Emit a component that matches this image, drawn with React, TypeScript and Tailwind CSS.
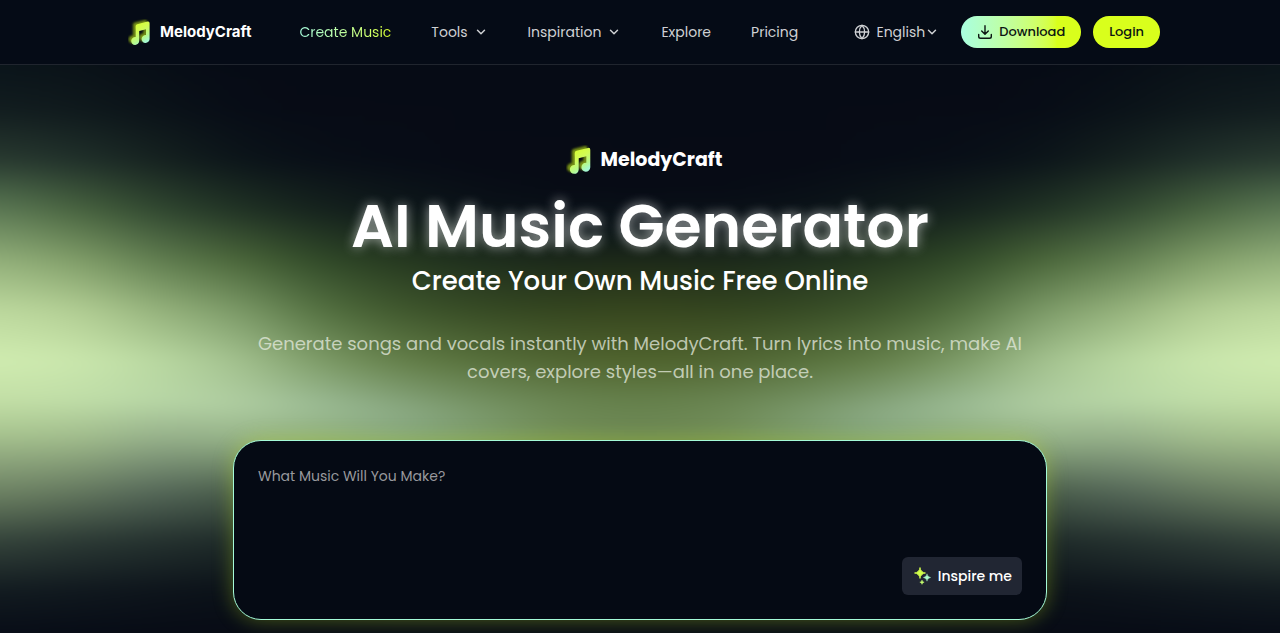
import React from "react";
import { ChevronDown, Globe } from "lucide-react";

type Column = { x: number; stops: [number, string][] };

const glow: Column[] = [
  { x: 0, stops: [[65, "#0a141a"], [110, "#121d1f"], [160, "#293a30"], [192, "#4a6548"], [228, "#708d62"], [264, "#96b37d"], [310, "#bcd89d"], [360, "#d0ecb0"], [400, "#c3dfa6"], [430, "#abc892"], [463, "#8aa27a"], [500, "#65795d"], [540, "#35443b"], [590, "#121b20"], [633, "#080d17"]] },
  { x: 80, stops: [[65, "#0a1218"], [110, "#0f191c"], [160, "#20302a"], [210, "#48643f"], [260, "#809d68"], [310, "#b2ce94"], [360, "#cae7ad"], [400, "#c0dea8"], [440, "#9fba8a"], [490, "#667a60"], [540, "#2c3a35"], [590, "#10181e"], [633, "#070c16"]] },
  { x: 160, stops: [[65, "#070d16"], [110, "#0a1218"], [160, "#15211f"], [210, "#304730"], [260, "#5f7c4f"], [310, "#94b17b"], [360, "#b9d8a1"], [400, "#b8d7a6"], [440, "#92ac88"], [490, "#56695a"], [540, "#25322f"], [590, "#0d141b"], [633, "#070b15"]] },
  { x: 240, stops: [[65, "#060b15"], [110, "#070c16"], [160, "#0b1419"], [210, "#203224"], [260, "#4a6639"], [310, "#7b9967"], [360, "#a2c08e"], [405, "#b0cea2"], [440, "#94b186"], [490, "#4c604c"], [540, "#1e2a29"], [590, "#0b1118"], [633, "#070b15"]] },
  { x: 320, stops: [[65, "#060b15"], [110, "#070b15"], [160, "#080e17"], [210, "#15221d"], [260, "#304928"], [310, "#537040"], [360, "#7c9a66"], [405, "#9bbb95"], [440, "#91b07c"], [490, "#485a43"], [540, "#19241f"], [633, "#070b15"]] },
  { x: 400, stops: [[65, "#060b15"], [160, "#070c16"], [210, "#0e181a"], [260, "#25381f"], [310, "#3f572d"], [360, "#637e48"], [410, "#8baa84"], [440, "#86a780"], [490, "#455740"], [633, "#070b15"]] },
  { x: 480, stops: [[65, "#060b15"], [170, "#070b15"], [210, "#0a1218"], [260, "#1e2e1d"], [310, "#364a24"], [360, "#566f3a"], [410, "#799769"], [440, "#7d9d6e"], [490, "#40513a"], [633, "#070b15"]] },
  { x: 560, stops: [[65, "#060b15"], [190, "#070b15"], [230, "#0d161a"], [270, "#202e1a"], [310, "#34451f"], [360, "#506431"], [400, "#688350"], [440, "#74905a"], [490, "#3a492d"], [633, "#070b15"]] },
  { x: 640, stops: [[65, "#060b15"], [190, "#070b15"], [230, "#0c1619"], [270, "#222f19"], [310, "#37461e"], [360, "#4f632c"], [400, "#647f4a"], [440, "#6f8a58"], [490, "#38462b"], [633, "#070b15"]] },
];

function GlowBackdrop() {
  return (
    <svg className="absolute inset-0 h-full w-full" viewBox="0 65 1280 568" preserveAspectRatio="none" aria-hidden="true">
      <defs>
        <filter id="soften" filterUnits="userSpaceOnUse" x="-160" y="0" width="1600" height="700" colorInterpolationFilters="sRGB">
          <feGaussianBlur stdDeviation="36 8" />
        </filter>
        {glow.map((c) => (
          <linearGradient key={c.x} id={`glow-${c.x}`} gradientUnits="userSpaceOnUse" x1="0" x2="0" y1="65" y2="633">
            {c.stops.map(([y, color]) => (
              <stop key={y} offset={(y - 65) / 568} stopColor={color} />
            ))}
          </linearGradient>
        ))}
      </defs>
      <g filter="url(#soften)">
        {glow.map((c) => {
          const edge = c.x === 0;
          return (
            <g key={c.x} fill={`url(#glow-${c.x})`}>
              <rect x={edge ? -160 : c.x - 40} y="0" width={edge ? 200 : 81} height="700" />
              <rect x={1240 - c.x} y="0" width={edge ? 200 : 81} height="700" />
            </g>
          );
        })}
      </g>
    </svg>
  );
}

function NoteMark({ id, className }: { id: string; className: string }) {
  const shape = "M9 6.2 Q9 4.6 10.6 4.2 L21 1.6 Q23 1.2 23 3.2 V19 A4 4 0 1 1 19.4 15 V9.2 L12.600 10.900 V21 A4 4 0 1 1 9 17 Z";
  return (
    <svg className={className} viewBox="3 0 22 27" aria-hidden="true">
      <defs>
        <linearGradient id={id} x1="0" y1="0" x2="0.5" y2="1">
          <stop offset="0" stopColor="#d9ff20" />
          <stop offset="0.5" stopColor="#d2fb55" />
          <stop offset="0.8" stopColor="#b6f98c" />
          <stop offset="1" stopColor="#a5f8d2" />
        </linearGradient>
        <filter id={`${id}-soft`} x="-30%" y="-30%" width="160%" height="160%">
          <feGaussianBlur stdDeviation="0.8" />
        </filter>
      </defs>
      <path d={shape} transform="translate(-1 -0.6)" fill="#9dbd14" opacity="0.75" filter={`url(#${id}-soft)`} />
      <path d={shape} transform="translate(1.6 1)" fill={`url(#${id})`} />
    </svg>
  );
}

function DownloadIcon() {
  return (
    <svg className="size-4" viewBox="0 0 16 16" fill="none" stroke="currentColor" strokeWidth="1.4" strokeLinecap="round" strokeLinejoin="round" aria-hidden="true">
      <path d="M8 1.800 V10 M4.700 6.900 L8 10.200 L11.300 6.900 M1.700 10.500 V12.500 Q1.700 14.300 3.500 14.300 H12.500 Q14.300 14.300 14.300 12.500 V10.500" />
    </svg>
  );
}

function Sparkles() {
  return (
    <svg className="size-5" viewBox="0 0 20 20" aria-hidden="true">
      <path d="M8 1.500 Q8.700 6.300 13.500 7 Q8.700 7.700 8 12.500 Q7.300 7.700 2.500 7 Q7.300 6.300 8 1.500Z" fill="#d2ff4a" stroke="#d2ff4a" strokeWidth="0.8" strokeLinejoin="round" />
      <path d="M15 7.800 Q15.500 11 18.700 11.500 Q15.500 12 15 15.200 Q14.500 12 11.300 11.500 Q14.500 11 15 7.800Z" fill="#a9fbc8" stroke="#a9fbc8" strokeWidth="0.4" />
      <path d="M10 14 Q10.300 15.900 12.200 16.200 Q10.300 16.500 10 18.400 Q9.700 16.500 7.800 16.200 Q9.700 15.900 10 14Z" fill="#c6ff70" stroke="#c6ff70" strokeWidth="0.4" />
    </svg>
  );
}

export default function App() {
  return (
    <div className="flex min-h-screen flex-col bg-[#060b15] font-['Poppins','Inter',sans-serif] text-white">
      <header className="border-b border-[#20252e] bg-[#050b16]">
        <div className="flex h-16 items-center justify-between pr-[120px] pl-32">
          <div className="flex items-center">
            <a href="#" className="flex items-center gap-2.5 font-['Inter',sans-serif] text-[15px] font-bold">
              <NoteMark id="mark-nav" className="h-[27px] w-[22px]" />
              MelodyCraft
            </a>
            <nav className="ml-12 flex items-center gap-10 text-sm text-[#cfd1d4]">
              <a href="#" className="bg-linear-to-r from-[#a5fbdc] to-[#d9ff20] bg-clip-text text-transparent">Create Music</a>
              <button className="flex items-center gap-1.5">Tools <ChevronDown className="size-3.5" strokeWidth={2.5} /></button>
              <button className="flex items-center gap-1.5">Inspiration <ChevronDown className="size-3.5" strokeWidth={2.5} /></button>
              <a href="#">Explore</a>
              <a href="#">Pricing</a>
            </nav>
          </div>
          <div className="flex items-center gap-3 text-sm">
            <button className="mr-2.5 flex items-center text-[#cfd1d4]">
              <Globe className="mr-1.5 size-4" strokeWidth={2} />
              English
              <ChevronDown className="size-3.5" strokeWidth={2.5} />
            </button>
            <button className="flex h-8 items-center gap-1.5 rounded-full bg-linear-to-r from-[#a9ffe0] to-[#d9ff1c] to-80% px-4 text-[13px] font-medium text-[#0b1512]">
              <DownloadIcon /> Download
            </button>
            <button className="h-8 rounded-full bg-[#d9ff1c] px-4 text-[13px] font-medium text-[#0b1512]">Login</button>
          </div>
        </div>
      </header>

      <main className="relative flex flex-1 flex-col items-center overflow-hidden px-6 pt-20 pb-3">
        <GlowBackdrop />
        <div className="relative flex items-center gap-2.5 pl-2 text-[19px] leading-[30px] font-bold">
          <NoteMark id="mark-hero" className="h-[30px] w-[25px]" />
          MelodyCraft
        </div>
        <h1 className="relative mt-[15px] text-center text-[60px] leading-[72px] font-semibold [text-shadow:0_0_12px_rgba(255,255,255,0.6)]">
          AI Music Generator
        </h1>
        <h2 className="relative text-center text-[26px] leading-[38px] font-medium">Create Your Own Music Free Online</h2>
        <p className="relative mt-[30px] max-w-[800px] text-center text-lg leading-7 text-[#e5ebdf]/75">
          Generate songs and vocals instantly with MelodyCraft. Turn lyrics into music, make AI covers, explore styles—all in one place.
        </p>
        <div className="relative mt-[54px] flex h-[180px] w-full max-w-[814px] flex-col rounded-[28px] border border-[#a5fbd8] bg-[#050a14] p-6 shadow-[0_0_20px_rgba(190,230,30,0.35)]">
          <textarea aria-label="Music prompt" placeholder="What Music Will You Make?" className="min-h-0 w-full flex-1 resize-none bg-transparent text-sm leading-[22px] text-white outline-none placeholder:text-[#98999d]" />
          <button className="flex h-[38px] items-center gap-1.5 self-end rounded-md bg-[#212633] px-2.5 text-sm font-medium">
            <Sparkles /> Inspire me
          </button>
        </div>
      </main>
    </div>
  );
}
